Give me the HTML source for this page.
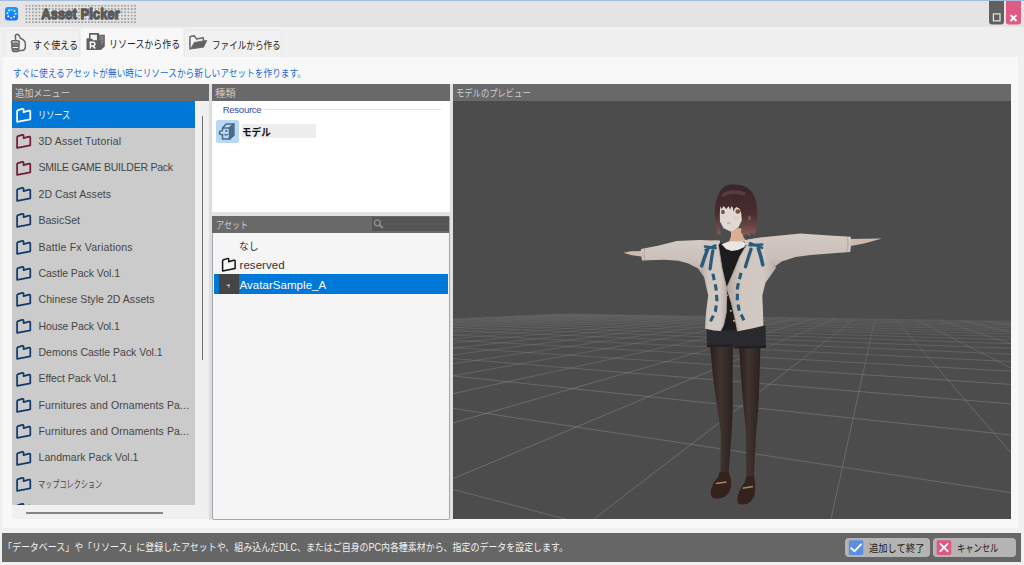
<!DOCTYPE html>
<html lang="ja">
<head>
<meta charset="utf-8">
<title>Asset Picker</title>
<style>
*{box-sizing:border-box;margin:0;padding:0}
html,body{width:1024px;height:565px;overflow:hidden;background:#f0f0f0}
body{position:relative;font-family:"Liberation Sans",sans-serif;font-size:12px;color:#444}
.a{position:absolute}
svg.jp{position:absolute;overflow:visible;display:block}
svg.jp text{font-family:"Liberation Sans","Noto Sans CJK JP",sans-serif;white-space:pre}
#frame{left:0;top:0;width:1024px;height:1px;background:#a3bcd9}
#titlebar{left:0;top:1px;width:1024px;height:26px;background:#e4e4e4}
#main{left:3px;top:57px;width:1015px;height:471px;background:#f8f8f8}
.tab{top:30px;height:27px;background:#f1f1f1;border:1px solid #e9e9e9;border-bottom:none}
.tab.on{top:28px;height:30px;background:#f8f8f8;border-color:#f0f0f0}
.hdr{background:#696969;height:16.7px}
.li{left:11.5px;width:183.5px;height:26.4px}
.lt{position:absolute;left:27px;top:0;margin-top:0.8px;line-height:26.4px;font-size:10.5px;color:#454545;white-space:nowrap}
.row{position:absolute;left:27px;font-size:11.5px;white-space:nowrap;letter-spacing:0.05px}
#status{left:1.5px;top:533px;width:1019.5px;height:28.5px;background:#666}
.btn{top:537.9px;height:19.5px;background:#b4b4b4;border-radius:4px}
</style>
</head>
<body>
<div class="a" id="titlebar"></div>
<div class="a" id="frame"></div>
<svg class="a" style="left:0;top:0" width="1024" height="28" viewBox="0 0 1024 28">
<defs><pattern id="dots" x="25.4" y="4.85" width="3.295" height="3.3" patternUnits="userSpaceOnUse"><rect x="0" y="0" width="1.75" height="1.75" fill="#9e9e9e"/></pattern><linearGradient id="icg" x1="0" y1="0" x2="0" y2="1"><stop offset="0" stop-color="#12a2ff"/><stop offset="1" stop-color="#1b6dff"/></linearGradient></defs>
<rect x="5" y="6.9" width="13.1" height="13.7" rx="3" fill="url(#icg)"/>
<circle cx="11.5" cy="13.75" r="4.1" fill="none" stroke="#fff" stroke-width="1.7" stroke-dasharray="1.5 1.72" stroke-dashoffset="0.75" transform="rotate(-90 11.5 13.75)"/>
<rect x="25.4" y="4.85" width="110.6" height="18.4" fill="url(#dots)"/>
<text x="41.2" y="18.6" font-family="'Liberation Sans',sans-serif" font-weight="bold" font-size="15" fill="#5a5a5a" stroke="#5a5a5a" stroke-width="1.3" stroke-linejoin="round" textLength="78.6" lengthAdjust="spacingAndGlyphs">Asset Picker</text>
<path d="M989 1 H1004 V21.5 a3 3 0 0 1 -3 3 H992 a3 3 0 0 1 -3 -3 Z" fill="#606060"/>
<path d="M1006 1 H1021 V21.5 a3 3 0 0 1 -3 3 H1009 a3 3 0 0 1 -3 -3 Z" fill="#e05b83"/>
<rect x="993.4" y="13.9" width="6.6" height="7" fill="none" stroke="#e8e8e8" stroke-width="1.2"/>
<path d="M1010.6 15.2 L1016.4 21 M1016.4 15.2 L1010.6 21" stroke="#fff" stroke-width="1.9" fill="none"/>
</svg>

<!-- tabs -->
<div class="a tab" style="left:4px;width:76px"></div>
<div class="a tab" style="left:184px;width:98px"></div>
<div class="a" id="main"></div>
<div class="a tab on" style="left:80px;width:104px"></div>
<svg class="a" style="left:0;top:28px" width="290" height="30" viewBox="0 28 290 30">
<!-- thumbs up -->
<g fill="none" stroke="#666" stroke-width="1.5" stroke-linejoin="round" stroke-linecap="round">
<path d="M15.7 40.4 L15.3 36.2 Q15.4 34.3 17.2 34.3 Q19 34.4 19.5 36.3 L20.5 38.2 Q24 39.8 25 41.8 Q25.8 45.5 25.2 47.8 Q24.6 50.4 22 50.5 L19.6 50.6"/>
<rect x="11.4" y="40.8" width="7.9" height="2.8" rx="1.3"/>
<rect x="11.8" y="43.6" width="7.4" height="2.7" rx="1.3" fill="#999"/>
<rect x="11.8" y="46.3" width="7.2" height="2.7" rx="1.3"/>
<rect x="12.4" y="49" width="6.4" height="2.6" rx="1.3" fill="#999"/>
</g>
<!-- resource icon -->
<g>
<path d="M89 33 H98.9 V34.7 H104.8 V46.6 L100.8 49.9 H86.5 V39 Q86.5 38.2 87.3 38.2 H89 Z" fill="#616161"/>
<path d="M90.5 34.8 H96.9 V40.2 H93 L92.2 38.7 H90.5 Z" fill="#f4f4f4"/>
<path d="M99.6 36.4 H103.6 M99.6 38.2 H103.6 M99.6 39.9 H103.6 M101 41.7 H103.6 M101 43.6 H103" stroke="#9a9a9a" stroke-width="0.9" fill="none"/>
<path d="M90.4 48.6 V42.2 H93.2 Q95 42.3 95 44.1 Q95 45.8 93.2 45.9 H90.4 M93 45.9 L95.3 48.6" fill="none" stroke="#fff" stroke-width="1.5"/>
</g>
<!-- open folder -->
<path d="M189.9 48.9 V37.2 Q189.9 36.7 190.5 36.6 L194.3 35.8 L196.5 38.9 L203.2 37.8 L203.5 40.8" fill="none" stroke="#666" stroke-width="1.5" stroke-linejoin="round" stroke-linecap="round"/>
<path d="M190.6 49 L194.4 42.4 L206.8 40.4 L203.6 47.2 Z" fill="#636363" stroke="#636363" stroke-width="0.8" stroke-linejoin="round"/>
</svg>

<svg class="jp" style="left:32.9px;top:36.7px" width="45.7" height="15.7" role="img" aria-label="すぐ使える"><text x="0" y="11.74" font-size="10.5" fill="#222" textLength="45.2" lengthAdjust="spacingAndGlyphs">すぐ使える</text></svg>
<svg class="jp" style="left:108.9px;top:35.7px" width="71.7" height="15.7" role="img" aria-label="リソースから作る"><text x="0" y="11.74" font-size="10.5" fill="#222" textLength="71.2" lengthAdjust="spacingAndGlyphs">リソースから作る</text></svg>
<svg class="jp" style="left:211.9px;top:36.7px" width="69.2" height="15.7" role="img" aria-label="ファイルから作る"><text x="0" y="11.74" font-size="10.5" fill="#222" textLength="68.7" lengthAdjust="spacingAndGlyphs">ファイルから作る</text></svg>
<svg class="jp" style="left:13.4px;top:65.5px" width="294.2" height="15.0" role="img" aria-label="すぐに使えるアセットが無い時にリソースから新しいアセットを作ります。"><text x="0" y="11.21" font-size="10" fill="#1c6ad6" textLength="293" lengthAdjust="spacingAndGlyphs">すぐに使えるアセットが無い時にリソースから新しいアセットを作ります。</text></svg>

<!-- left panel -->
<div class="a hdr" style="left:11.5px;top:84px;width:197.5px"></div>
<svg class="jp" style="left:14.7px;top:85.9px" width="55.4" height="14.4" role="img" aria-label="追加メニュー"><text x="0" y="10.79" font-size="9.7" fill="#cdcdcd" textLength="54.9" lengthAdjust="spacingAndGlyphs">追加メニュー</text></svg>
<div class="a" style="left:11.5px;top:101px;width:183.5px;height:404.6px;background:#cbcbcb;overflow:hidden">
<div class="a" style="left:0;top:0;width:183.5px;height:26.6px;background:#0078d7"></div>
<svg class="a" style="left:0;top:0.00px" width="24" height="26" viewBox="0 -0.4 24 26"><path d="M5.1 20.5 V10 Q5.1 9.1 6 8.8 L10.2 7.5 Q11.6 7.2 11.6 8.6 V10.8 L17 9.3 Q18.3 9 18.3 10.3 V17.9 Z" fill="none" stroke="#fdfdf5" stroke-width="1.75" stroke-linejoin="round"/></svg>
<svg class="a" style="left:0;top:26.35px" width="24" height="26" viewBox="0 -0.4 24 26"><path d="M5.1 20.5 V10 Q5.1 9.1 6 8.8 L10.2 7.5 Q11.6 7.2 11.6 8.6 V10.8 L17 9.3 Q18.3 9 18.3 10.3 V17.9 Z" fill="none" stroke="#741a3b" stroke-width="1.75" stroke-linejoin="round"/></svg>
<div class="lt" style="top:26.35px;letter-spacing:0.20px">3D Asset Tutorial</div>
<svg class="a" style="left:0;top:52.70px" width="24" height="26" viewBox="0 -0.4 24 26"><path d="M5.1 20.5 V10 Q5.1 9.1 6 8.8 L10.2 7.5 Q11.6 7.2 11.6 8.6 V10.8 L17 9.3 Q18.3 9 18.3 10.3 V17.9 Z" fill="none" stroke="#741a3b" stroke-width="1.75" stroke-linejoin="round"/></svg>
<div class="lt" style="top:52.70px;letter-spacing:-0.25px">SMILE GAME BUILDER Pack</div>
<svg class="a" style="left:0;top:79.05px" width="24" height="26" viewBox="0 -0.4 24 26"><path d="M5.1 20.5 V10 Q5.1 9.1 6 8.8 L10.2 7.5 Q11.6 7.2 11.6 8.6 V10.8 L17 9.3 Q18.3 9 18.3 10.3 V17.9 Z" fill="none" stroke="#123b6c" stroke-width="1.75" stroke-linejoin="round"/></svg>
<div class="lt" style="top:79.05px;letter-spacing:0.06px">2D Cast Assets</div>
<svg class="a" style="left:0;top:105.40px" width="24" height="26" viewBox="0 -0.4 24 26"><path d="M5.1 20.5 V10 Q5.1 9.1 6 8.8 L10.2 7.5 Q11.6 7.2 11.6 8.6 V10.8 L17 9.3 Q18.3 9 18.3 10.3 V17.9 Z" fill="none" stroke="#123b6c" stroke-width="1.75" stroke-linejoin="round"/></svg>
<div class="lt" style="top:105.40px;letter-spacing:0.01px">BasicSet</div>
<svg class="a" style="left:0;top:131.75px" width="24" height="26" viewBox="0 -0.4 24 26"><path d="M5.1 20.5 V10 Q5.1 9.1 6 8.8 L10.2 7.5 Q11.6 7.2 11.6 8.6 V10.8 L17 9.3 Q18.3 9 18.3 10.3 V17.9 Z" fill="none" stroke="#123b6c" stroke-width="1.75" stroke-linejoin="round"/></svg>
<div class="lt" style="top:131.75px;letter-spacing:0.20px">Battle Fx Variations</div>
<svg class="a" style="left:0;top:158.10px" width="24" height="26" viewBox="0 -0.4 24 26"><path d="M5.1 20.5 V10 Q5.1 9.1 6 8.8 L10.2 7.5 Q11.6 7.2 11.6 8.6 V10.8 L17 9.3 Q18.3 9 18.3 10.3 V17.9 Z" fill="none" stroke="#123b6c" stroke-width="1.75" stroke-linejoin="round"/></svg>
<div class="lt" style="top:158.10px;letter-spacing:-0.05px">Castle Pack Vol.1</div>
<svg class="a" style="left:0;top:184.45px" width="24" height="26" viewBox="0 -0.4 24 26"><path d="M5.1 20.5 V10 Q5.1 9.1 6 8.8 L10.2 7.5 Q11.6 7.2 11.6 8.6 V10.8 L17 9.3 Q18.3 9 18.3 10.3 V17.9 Z" fill="none" stroke="#123b6c" stroke-width="1.75" stroke-linejoin="round"/></svg>
<div class="lt" style="top:184.45px;letter-spacing:0.05px">Chinese Style 2D Assets</div>
<svg class="a" style="left:0;top:210.80px" width="24" height="26" viewBox="0 -0.4 24 26"><path d="M5.1 20.5 V10 Q5.1 9.1 6 8.8 L10.2 7.5 Q11.6 7.2 11.6 8.6 V10.8 L17 9.3 Q18.3 9 18.3 10.3 V17.9 Z" fill="none" stroke="#123b6c" stroke-width="1.75" stroke-linejoin="round"/></svg>
<div class="lt" style="top:210.80px;letter-spacing:-0.11px">House Pack Vol.1</div>
<svg class="a" style="left:0;top:237.15px" width="24" height="26" viewBox="0 -0.4 24 26"><path d="M5.1 20.5 V10 Q5.1 9.1 6 8.8 L10.2 7.5 Q11.6 7.2 11.6 8.6 V10.8 L17 9.3 Q18.3 9 18.3 10.3 V17.9 Z" fill="none" stroke="#123b6c" stroke-width="1.75" stroke-linejoin="round"/></svg>
<div class="lt" style="top:237.15px;letter-spacing:-0.01px">Demons Castle Pack Vol.1</div>
<svg class="a" style="left:0;top:263.50px" width="24" height="26" viewBox="0 -0.4 24 26"><path d="M5.1 20.5 V10 Q5.1 9.1 6 8.8 L10.2 7.5 Q11.6 7.2 11.6 8.6 V10.8 L17 9.3 Q18.3 9 18.3 10.3 V17.9 Z" fill="none" stroke="#123b6c" stroke-width="1.75" stroke-linejoin="round"/></svg>
<div class="lt" style="top:263.50px;letter-spacing:-0.04px">Effect Pack Vol.1</div>
<svg class="a" style="left:0;top:289.85px" width="24" height="26" viewBox="0 -0.4 24 26"><path d="M5.1 20.5 V10 Q5.1 9.1 6 8.8 L10.2 7.5 Q11.6 7.2 11.6 8.6 V10.8 L17 9.3 Q18.3 9 18.3 10.3 V17.9 Z" fill="none" stroke="#123b6c" stroke-width="1.75" stroke-linejoin="round"/></svg>
<div class="lt" style="top:289.85px;letter-spacing:0.12px">Furnitures and Ornaments Pa...</div>
<svg class="a" style="left:0;top:316.20px" width="24" height="26" viewBox="0 -0.4 24 26"><path d="M5.1 20.5 V10 Q5.1 9.1 6 8.8 L10.2 7.5 Q11.6 7.2 11.6 8.6 V10.8 L17 9.3 Q18.3 9 18.3 10.3 V17.9 Z" fill="none" stroke="#123b6c" stroke-width="1.75" stroke-linejoin="round"/></svg>
<div class="lt" style="top:316.20px;letter-spacing:0.12px">Furnitures and Ornaments Pa...</div>
<svg class="a" style="left:0;top:342.55px" width="24" height="26" viewBox="0 -0.4 24 26"><path d="M5.1 20.5 V10 Q5.1 9.1 6 8.8 L10.2 7.5 Q11.6 7.2 11.6 8.6 V10.8 L17 9.3 Q18.3 9 18.3 10.3 V17.9 Z" fill="none" stroke="#123b6c" stroke-width="1.75" stroke-linejoin="round"/></svg>
<div class="lt" style="top:342.55px;letter-spacing:0.04px">Landmark Pack Vol.1</div>
<svg class="a" style="left:0;top:368.90px" width="24" height="26" viewBox="0 -0.4 24 26"><path d="M5.1 20.5 V10 Q5.1 9.1 6 8.8 L10.2 7.5 Q11.6 7.2 11.6 8.6 V10.8 L17 9.3 Q18.3 9 18.3 10.3 V17.9 Z" fill="none" stroke="#123b6c" stroke-width="1.75" stroke-linejoin="round"/></svg>
<svg class="a" style="left:0;top:395.25px" width="24" height="26" viewBox="0 -0.4 24 26"><path d="M5.1 20.5 V10 Q5.1 9.1 6 8.8 L10.2 7.5 Q11.6 7.2 11.6 8.6 V10.8 L17 9.3 Q18.3 9 18.3 10.3 V17.9 Z" fill="none" stroke="#123b6c" stroke-width="1.75" stroke-linejoin="round"/></svg>
</div>
<svg class="jp" style="left:37.9px;top:107.2px" width="32.7" height="15.5" role="img" aria-label="リソース"><text x="0" y="11.63" font-size="10.4" fill="#fff" textLength="32.2" lengthAdjust="spacingAndGlyphs">リソース</text></svg>
<svg class="jp" style="left:37.9px;top:475.8px" width="64.7" height="15.5" role="img" aria-label="マップコレクション"><text x="0" y="11.63" font-size="10.4" fill="#454545" textLength="64.2" lengthAdjust="spacingAndGlyphs">マップコレクション</text></svg>
<div class="a" style="left:195px;top:101px;width:14px;height:418px;background:#f0f0f0"></div>
<div class="a" style="left:11.5px;top:505px;width:197.5px;height:14px;background:#f0f0f0"></div>
<div class="a" style="left:201.7px;top:116px;width:1.6px;height:244px;background:#6e6e6e"></div>
<div class="a" style="left:25.5px;top:512.2px;width:137.5px;height:1.8px;background:#858585"></div>

<!-- kind panel -->
<div class="a" style="left:209.2px;top:84px;width:3px;height:435.5px;background:#dedede"></div>
<div class="a" style="left:449.8px;top:84px;width:3px;height:435.5px;background:#e1e1e1"></div>
<div class="a" style="left:212.2px;top:212.3px;width:237.6px;height:3.6px;background:#e3e3e3"></div>
<div class="a" style="left:212.2px;top:84px;width:237.5px;height:128.3px;background:#fff"></div>
<div class="a hdr" style="left:212.3px;top:84px;width:237.3px;height:16.7px"></div>
<svg class="jp" style="left:215.4px;top:85.9px" width="22.7" height="14.4" role="img" aria-label="種類"><text x="0" y="10.79" font-size="9.7" fill="#cdcdcd" textLength="20.7" lengthAdjust="spacingAndGlyphs">種類</text></svg>
<div class="a" style="left:222.7px;top:102px;font-size:9.6px;line-height:15px;color:#3b4aa5;letter-spacing:-0.3px">Resource</div>
<div class="a" style="left:265px;top:108.6px;width:176px;height:1.4px;background:#dde4f6"></div>
<div class="a" style="left:216px;top:120px;width:22.5px;height:23px;background:#b9d8f4;border-radius:2px"></div>
<div class="a" style="left:242px;top:124px;width:74px;height:14px;background:#ededed"></div>
<svg class="a" style="left:214px;top:118px" width="28" height="28" viewBox="214 118 28 28">
<g stroke="#4a6a86" stroke-width="1.5" stroke-linejoin="round" fill="none">
<path d="M222.5 130.6 V127.9 H229.6 V139.1 H222.5 V134.8 L219.6 134 V131.4 Z"/>
<path d="M222.5 127.9 L226.2 124.1 H233.9 L229.6 127.9"/>
<path d="M229.6 127.9 L233.9 124.1 V135.3 L229.6 139.1 Z" fill="#4a6a86"/>
</g>
<circle cx="226.4" cy="130.9" r="1.05" fill="#4a6a86"/>
<path d="M224.4 134.3 Q226.3 136 228 134.2" stroke="#4a6a86" stroke-width="1.2" fill="none"/>
</svg>

<svg class="jp" style="left:241.6px;top:124.4px" width="29.2" height="15.5" role="img" aria-label="モデル"><text x="0" y="11.63" font-size="10.4" font-weight="bold" fill="#111" textLength="28.7" lengthAdjust="spacingAndGlyphs">モデル</text></svg>

<!-- asset panel -->
<div class="a" style="left:212.1px;top:215.9px;width:237.6px;height:303.8px;background:#f5f5f5;border:1.2px solid #a3a6b3;border-radius:0 0 2px 2px"></div>
<div class="a hdr" style="left:212.4px;top:215.9px;width:237px;height:17.6px"></div>
<div class="a" style="left:372.1px;top:217.1px;width:77px;height:14.2px;background:#555"></div>
<svg class="a" style="left:372px;top:217px" width="16" height="15" viewBox="372 217 16 15"><circle cx="377.3" cy="222.8" r="2.9" fill="none" stroke="#8c8c8c" stroke-width="1.4"/><path d="M379.6 225.3 L382.3 227.4" stroke="#8c8c8c" stroke-width="2" stroke-linecap="round"/></svg>

<svg class="jp" style="left:215.8px;top:217.8px" width="32.6" height="14.4" role="img" aria-label="アセット"><text x="0" y="10.79" font-size="9.7" fill="#cdcdcd" textLength="32.1" lengthAdjust="spacingAndGlyphs">アセット</text></svg>
<svg class="jp" style="left:238.9px;top:237.7px" width="20.2" height="15.5" role="img" aria-label="なし"><text x="0" y="11.63" font-size="10.4" fill="#333" textLength="19.7" lengthAdjust="spacingAndGlyphs">なし</text></svg>
<div class="a row" style="left:239.5px;top:256.9px;color:#333;line-height:16px">reserved</div>
<div class="a" style="left:214px;top:274px;width:234px;height:20px;background:#0078d7"></div>
<div class="a" style="left:219px;top:274px;width:19.5px;height:20px;background:#454545"></div>
<div class="a row" style="left:239.5px;top:277px;color:#fff;line-height:16px">AvatarSample_A</div>
<svg class="a" style="left:218px;top:254px" width="24" height="42" viewBox="218 254 24 42">
<path d="M222.6 270.9 V260.9 Q222.6 260 223.4 259.8 L227.4 258.6 Q228.7 258.3 228.7 259.6 V261.7 L233.9 260.3 Q235.1 260 235.1 261.2 V268.6 Z" fill="none" stroke="#111" stroke-width="1.5" stroke-linejoin="round"/>
<path d="M226.3 285.3 H230 M228.9 283.9 V287.6" stroke="#cfcfcf" stroke-width="0.9" fill="none"/>
</svg>


<!-- preview -->
<div class="a" style="left:453px;top:84px;width:558px;height:435.4px;background:#4c4c4c"></div>
<div class="a hdr" style="left:453px;top:84px;width:558px;height:16.7px"></div>
<svg class="jp" style="left:455.7px;top:86.0px" width="75.2" height="14.4" role="img" aria-label="モデルのプレビュー"><text x="0" y="10.79" font-size="9.7" fill="#cdcdcd" textLength="74.7" lengthAdjust="spacingAndGlyphs">モデルのプレビュー</text></svg>
<svg class="a" style="left:453px;top:100.7px" width="558" height="418.7" viewBox="453 100.7 558 418.7"><defs><linearGradient id="fade" x1="0" y1="0" x2="0" y2="1"><stop offset="0" stop-color="#4c4c4c" stop-opacity="0.68"/><stop offset="1" stop-color="#4c4c4c" stop-opacity="0"/></linearGradient></defs><path d="M-92193.0 4523.3 L-20586.5 1233.7M-80202.0 4523.3 L-5584.0 581.1M-68211.0 4523.3 L-2925.2 465.5M-56220.0 4523.3 L-1816.4 417.2M-44229.0 4523.3 L-1208.0 390.8M-32238.0 4523.3 L-823.7 374.1M-20247.0 4523.3 L-559.0 362.5M-8256.0 4523.3 L-365.4 354.1M3735.0 4523.3 L-217.8 347.7M15726.0 4523.3 L-101.5 342.6M27717.0 4523.3 L-7.5 338.6M39708.0 4523.3 L70.0 335.2M51699.0 4523.3 L135.1 332.4M63690.0 4523.3 L190.5 329.9M75681.0 4523.3 L238.2 327.9M53906.4 2901.6 L279.7 326.1M7979.5 648.4 L316.2 324.5M4684.0 486.7 L348.5 323.1M3477.8 427.5 L377.3 321.8M2852.3 396.8 L403.1 320.7M2469.5 378.0 L426.4 319.7M2211.0 365.4 L447.5 318.8M2024.9 356.2 L466.7 317.9M1884.3 349.3 L484.3 317.2M1774.5 343.9 L500.5 316.5M1686.3 339.6 L515.4 315.8M1614.0 336.1 L529.1 315.2M1553.5 333.1 L541.9 314.7M1502.2 330.6 L553.7 314.1M1458.2 328.4 L564.8 313.7M86960.2 4523.3 L1458.2 328.4M82380.7 4523.3 L1413.0 327.7M77801.3 4523.3 L1370.1 327.0M73221.9 4523.3 L1329.3 326.3M68642.5 4523.3 L1290.5 325.6M64063.1 4523.3 L1253.6 325.0M59483.6 4523.3 L1218.4 324.5M54904.2 4523.3 L1184.8 323.9M50324.8 4523.3 L1152.6 323.4M45745.4 4523.3 L1121.9 322.9M41166.0 4523.3 L1092.5 322.4M36586.5 4523.3 L1064.3 321.9M32007.1 4523.3 L1037.2 321.5M27427.7 4523.3 L1011.2 321.0M22848.3 4523.3 L986.3 320.6M18268.9 4523.3 L962.3 320.2M13689.4 4523.3 L939.2 319.8M9110.0 4523.3 L917.0 319.5M4530.6 4523.3 L895.5 319.1M-48.8 4523.3 L874.9 318.8M-4628.2 4523.3 L854.9 318.5M-9207.7 4523.3 L835.7 318.1M-13787.1 4523.3 L817.1 317.8M-18366.5 4523.3 L799.1 317.5M-22945.9 4523.3 L781.7 317.2M-27525.3 4523.3 L764.9 317.0M-32104.8 4523.3 L748.6 316.7M-36684.2 4523.3 L732.8 316.4M-41263.6 4523.3 L717.5 316.2M-45843.0 4523.3 L702.6 315.9M-50422.4 4523.3 L688.2 315.7M-55001.9 4523.3 L674.3 315.5M-59581.3 4523.3 L660.7 315.2M-64160.7 4523.3 L647.5 315.0M-68740.1 4523.3 L634.7 314.8M-73319.5 4523.3 L622.2 314.6M-77899.0 4523.3 L610.1 314.4M-82478.4 4523.3 L598.3 314.2M-87057.8 4523.3 L586.9 314.0M-91637.2 4523.3 L575.7 313.8M-96216.6 4523.3 L564.8 313.7" fill="none" stroke="#b4b4b4" stroke-opacity="0.33" stroke-width="0.9"/><rect x="452" y="308" width="560" height="80" fill="url(#fade)"/><defs>
<filter id="fb" x="-5%" y="-5%" width="110%" height="110%"><feGaussianBlur stdDeviation="0.55"/></filter>
<linearGradient id="hairg" x1="0" y1="0" x2="0" y2="1"><stop offset="0" stop-color="#3a2628"/><stop offset="0.6" stop-color="#4a2e30"/><stop offset="1" stop-color="#8a5c58"/></linearGradient>
<linearGradient id="legL" x1="0" y1="0" x2="1" y2="0"><stop offset="0" stop-color="#271e1c"/><stop offset="0.45" stop-color="#3f332f"/><stop offset="1" stop-color="#2a2120"/></linearGradient>
<linearGradient id="card" x1="0" y1="0" x2="1" y2="0"><stop offset="0" stop-color="#b5aaa3"/><stop offset="0.3" stop-color="#d0c7c0"/><stop offset="0.75" stop-color="#d2c9c2"/><stop offset="1" stop-color="#b8ada6"/></linearGradient>
<linearGradient id="slv" x1="0" y1="0" x2="0" y2="1"><stop offset="0" stop-color="#d3cac3"/><stop offset="0.6" stop-color="#c9bfb8"/><stop offset="1" stop-color="#aea39c"/></linearGradient>
</defs>
<g filter="url(#fb)">
<!-- legs -->
<path d="M710 345 L733 345 L732.6 380 L732.8 408 L731.6 432 L728.6 474 L720.4 474 L720.8 432 L717.4 408 L713.4 380 Z" fill="url(#legL)"/>
<path d="M739 345 L760.5 345 L759.4 380 L758.4 408 L756.2 432 L753.8 478 L746.4 478 L746.2 432 L743.6 408 L741.2 380 Z" fill="url(#legL)"/>
<!-- shoes -->
<path d="M719.5 472 L728.8 472 Q731.6 478 731.2 485 Q730.5 492 725 496.5 Q718 500 712.5 497.5 Q710 495 711 489.5 Q713 482 718 477 Z" fill="#35211d"/>
<path d="M746.3 476 L754.2 476 Q755.8 484 755 492 Q754 499 748.5 503 Q742 505.5 738.3 503 Q736.5 500 738 494.5 Q740.5 487 745 481.5 Z" fill="#35211d"/>
<path d="M716 483.2 L726.5 481.6" fill="none" stroke="#a58a62" stroke-width="1.5"/>
<path d="M742.6 488 L753 486.2" fill="none" stroke="#a58a62" stroke-width="1.5"/>
<!-- shorts -->
<path d="M706.5 326 L765.5 325 L766 348 L734 348.5 L733 346.5 L707 347 Z" fill="#2b2b2f"/>
<path d="M707 345.5 L733 345 M735 347 L766 346.5" stroke="#1c1c1f" stroke-width="1.5" fill="none"/>
<!-- arms / sleeves -->
<path d="M623.4 252.5 L631 250.9 L641.5 250.6 L641.5 256.2 L632 255 Z" fill="#cdbbae"/>
<path d="M881.9 238.3 L866 238.4 L850.5 238.8 L850.5 245.6 L864 243.2 L874 240.4 Z" fill="#cdbbae"/>
<path d="M641 248.6 L659 245.1 L676.6 240.7 L700 239.6 L720 240.5 L720 272 L704 277 L698.1 268.1 L688.4 263.2 L678.6 260.4 L664 259.4 L642 260.3 Q640.6 254.5 641 248.6 Z" fill="url(#slv)"/>
<path d="M745 240 L760 237.1 L780.3 235.2 L800.6 233.3 L829.8 235.2 L850.8 236.4 Q851.6 244 850.2 251.7 L829.8 253.2 L810.8 254.8 L795.5 256.7 L781.6 261.2 L774 266.9 L768.9 275 L745 274 Z" fill="url(#slv)"/>
<path d="M644.5 249 Q643.4 254.5 645 260 M847.6 236.8 Q848.6 244 847 251.6" fill="none" stroke="#aa9f98" stroke-width="1" opacity="0.8"/>
<!-- neck -->
<path d="M731 228 L742.3 228 L743 236 L746.5 241.5 L729 241.5 L731 236 Z" fill="#dcae94"/>
<!-- black shirt -->
<path d="M716 243 L748 243.5 L742 330 L716 330 Z" fill="#1d1d1f"/>
<!-- cardigan body -->
<path d="M720 240.5 L713.5 240.3 L700.7 267.5 L703.9 276 L708.2 295.1 L706 312 L705 328.5 L714 330.3 L720.5 330.8 L723.6 325 L726.2 312 L726.8 289 L722 268 L718.5 246 Z" fill="url(#card)"/>
<path d="M744 240 L756 238 L776.1 267.5 L765.5 282.4 L762.3 295.1 L763 312 L763.4 325.5 L752 328.3 L737.6 331 L735 318 L731.5 303 L726.8 287.5 L733.5 272 L740 256 L746.5 245 Z" fill="url(#card)"/>
<!-- white collar -->
<path d="M721.5 244 L726 248.8 L731.5 250.6 L738 249.8 L744 247 L746.5 243.5 L742 241 L729.5 241 Z" fill="#e9e5e1"/>
<!-- blue ribbons -->
<g fill="none" stroke="#2a5b7a" stroke-linecap="round" stroke-linejoin="round">
<path d="M705 246.2 L715.6 247.8 M705.6 249.6 L715.4 245.2" stroke-width="2.6"/>
<path d="M707.2 250 L704.6 257 L701.8 265.5" stroke-width="3.5"/>
<path d="M712.8 250.5 L711.4 259 L710.1 268.5" stroke-width="3.3"/>
<path d="M749.6 245 L762.2 244.2 M750 243 L762 247.5" stroke-width="2.6"/>
<path d="M751 249 L748.4 257 L745.4 266.5" stroke-width="3.3"/>
<path d="M758.4 248.5 L760.8 256 L762.8 264.5" stroke-width="3.6"/>
</g>
<!-- dashed trims -->
<path d="M712.9 273.5 L716 288 L716.9 300 L715.4 311 L709.6 323" fill="none" stroke="#2a5b7a" stroke-width="3.1" stroke-dasharray="6.4 4.3"/>
<path d="M741 272.5 L737.5 287 L737.3 300 L739.2 310.5 L745.2 322.5" fill="none" stroke="#2a5b7a" stroke-width="3.1" stroke-dasharray="6.4 4.3"/>
<path d="M718.5 246 L722 268 L726.8 289 L726.2 312 L723.6 325 L720.5 330.8" fill="none" stroke="#b0a59e" stroke-width="0.9"/>
<path d="M746.5 245 L740 256 L733.5 272 L726.8 287.5 L731.5 303 L735 318 L737.6 331" fill="none" stroke="#b0a59e" stroke-width="0.9"/>
<!-- buttons -->
<g fill="#c9a874"><circle cx="735" cy="270.5" r="1.1"/><circle cx="731" cy="282.3" r="1.1"/><circle cx="726.8" cy="295" r="1.1"/><circle cx="730.8" cy="310.5" r="1.1"/><circle cx="734" cy="320.5" r="1.1"/><circle cx="737.8" cy="328.5" r="1.1"/></g>
<!-- head -->
<path d="M719.3 203 L741.3 203 L741.8 220 L738.5 227 L731 231.5 L723.6 228 L719.8 221 Z" fill="#e0d8d3"/>
<ellipse cx="735.9" cy="217.6" rx="2.6" ry="1.8" fill="#e8c9c0"/>
<ellipse cx="728.8" cy="222.9" rx="2" ry="0.9" fill="#dba9a6"/>
<ellipse cx="722.9" cy="211.7" rx="1.9" ry="2.2" fill="#74574c"/>
<ellipse cx="737.8" cy="211.2" rx="2.4" ry="2.2" fill="#80503a"/>
<!-- hair -->
<path d="M714.9 211 C714.8 203 717 195 721.7 188.7 C725 185.5 728 184.3 731.5 184.2 C736 184 740 184.5 743.5 185.7 C748 187.5 751 190 752.6 193 C755 197 756.3 201 756.6 205 C757.2 211 757.2 217 757 222 C756.8 227 756.3 231 754.5 234.6 L751.6 232.4 L749 235.6 L746.2 233.4 L743.6 235.6 L740.9 232 L742.3 222 L741.4 213.5 L739.6 208.4 L736.6 206.6 L734.6 208.4 L733.6 211.4 L732.9 207.4 L731.4 206 L730.3 209.2 L728.6 206 L726.2 208.6 L723.6 205.6 L721.6 208.8 L720.4 206 L719.6 214 L719.9 227 L721.2 234.6 L717.3 233.4 C716 228 715.3 222 715 217 Z" fill="url(#hairg)"/>
<path d="M721 195 C725 189.5 737 188.4 745 192 C746 194 745 196 742 195 C736 192.6 727 193.4 722.5 197 Z" fill="#6a5154" opacity="0.55"/>
<ellipse cx="749.4" cy="217.6" rx="1.2" ry="2.6" fill="#e6d5cc" opacity="0.3"/>
</g>
</svg>

<!-- status bar -->
<div class="a" id="status"></div>
<svg class="jp" style="left:3.4px;top:539.9px" width="569.2" height="15.1" role="img" aria-label="「データベース」や「リソース」に登録したアセットや、組み込んだDLC、またはご自身のPC内各種素材から、指定のデータを設定します。"><text x="0" y="11.32" font-size="10.15" fill="#f2f2f2" textLength="565" lengthAdjust="spacingAndGlyphs">「データベース」や「リソース」に登録したアセットや、組み込んだDLC、またはご自身のPC内各種素材から、指定のデータを設定します。</text></svg>
<div class="a btn" style="left:844.5px;width:85px"></div>
<div class="a btn" style="left:932.5px;width:83.5px"></div>
<svg class="a" style="left:846px;top:538px" width="108" height="20" viewBox="846 538 108 20">
<rect x="848.8" y="540.2" width="14.5" height="14.7" rx="1.6" fill="#5a8ee0"/>
<path d="M851.2 548.3 L854.7 551.2 L861 544.4" fill="none" stroke="#fff" stroke-width="1.9" stroke-linecap="round" stroke-linejoin="round"/>
<rect x="936.7" y="540.2" width="14.6" height="14.7" rx="1.6" fill="#e0587f"/>
<path d="M940.4 543.9 L947.6 551.2 M947.6 543.9 L940.4 551.2" fill="none" stroke="#fff" stroke-width="1.9" stroke-linecap="round"/>
</svg>

<svg class="jp" style="left:868.9px;top:539.6px" width="57.7" height="15.7" role="img" aria-label="追加して終了"><text x="0" y="11.74" font-size="10.5" fill="#1c1c1c" textLength="55.5" lengthAdjust="spacingAndGlyphs">追加して終了</text></svg>
<svg class="jp" style="left:956.9px;top:539.6px" width="41.7" height="15.7" role="img" aria-label="キャンセル"><text x="0" y="11.74" font-size="10.5" fill="#1c1c1c" textLength="41.2" lengthAdjust="spacingAndGlyphs">キャンセル</text></svg>
</body>
</html>
